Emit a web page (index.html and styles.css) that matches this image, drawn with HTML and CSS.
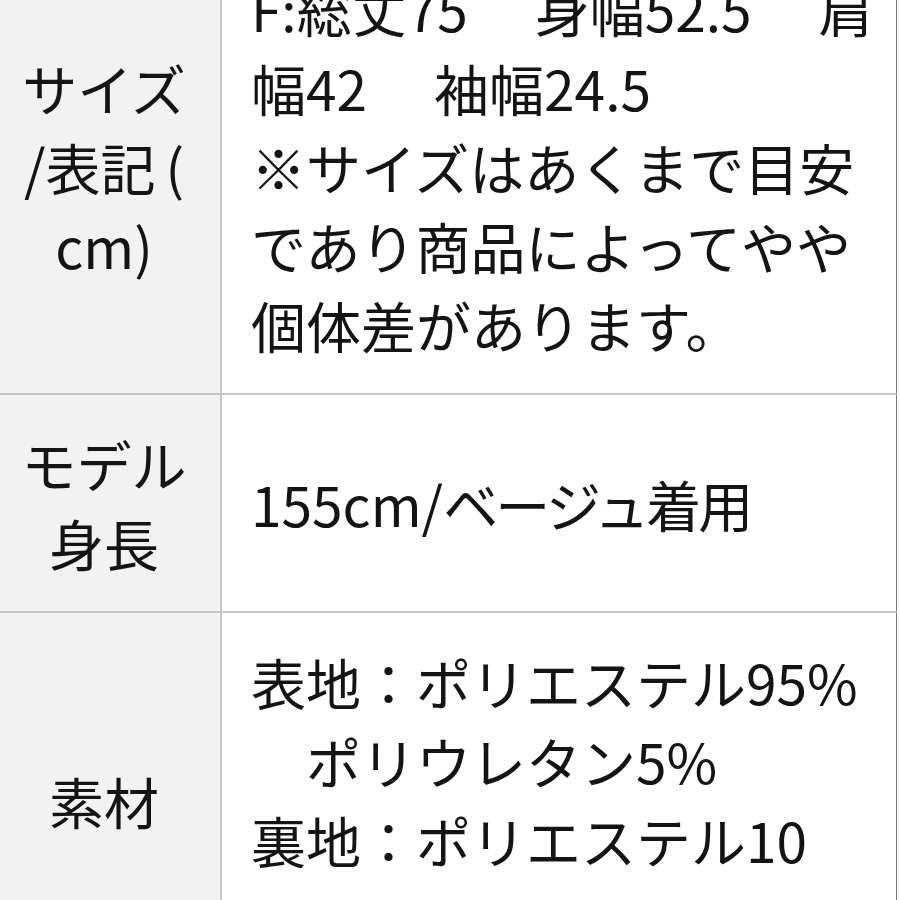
FILE: index.html
```html
<!DOCTYPE html>
<html lang="ja">
<head>
<meta charset="utf-8">
<link rel="stylesheet" href="styles.css">
</head>
<body>
<div class="viewport">
  <table class="spec">
    <tr>
      <th>サイズ<br>/表記<span class="paren">(</span><br>cm)</th>
      <td>F:総丈75<span class="sp">　</span>身幅52.5<span class="sp">　</span>肩幅42<span class="sp">　</span>袖幅24.5<br>※サイズはあくまで目安であり商品によってやや個体差があります。</td>
    </tr>
    <tr>
      <th>モデル<br>身長</th>
      <td>155cm/<span class="tight">ベージュ着用</span></td>
    </tr>
    <tr>
      <th>素材</th>
      <td>表地：ポリエステル95%<br>　ポリウレタン5%<br>裏地：ポリエステル10<wbr>0%</td>
    </tr>
  </table>
</div>
</body>
</html>
```
FILE: styles.css
```css
html, body {
  margin: 0;
  padding: 0;
  background: #ffffff;
}
.viewport {
  width: 900px;
  height: 900px;
  overflow: hidden;
}
.spec {
  margin-top: -64px;
  margin-left: -2px;
  width: 899px;
  border-collapse: collapse;
  font-family: "Noto Sans CJK JP", "Noto Sans", sans-serif;
  font-size: 55px;
  line-height: 79px;
  color: #141414;
  border-right: 1px solid #777;
}
.spec th,
.spec td {
  border: 2px solid #c6c6c6;
  font-weight: 400;
  vertical-align: middle;
}
.spec th {
  width: 180px;
  padding: 29px 26px 29px 14px;
  background: #f2f2f2;
  text-align: center;
}
.spec tr:first-child th,
.spec tr:first-child td {
  padding-top: 31px;
}
.spec td {
  padding: 29px 16px 29px 29px;
  text-align: left;
  background: #ffffff;
}
.spec td:last-child {
  border-right: 1px solid #777;
}
.sp {
  letter-spacing: 12px;
}
.tight {
  letter-spacing: -3px;
}
.paren {
  margin-left: 10px;
}
```
